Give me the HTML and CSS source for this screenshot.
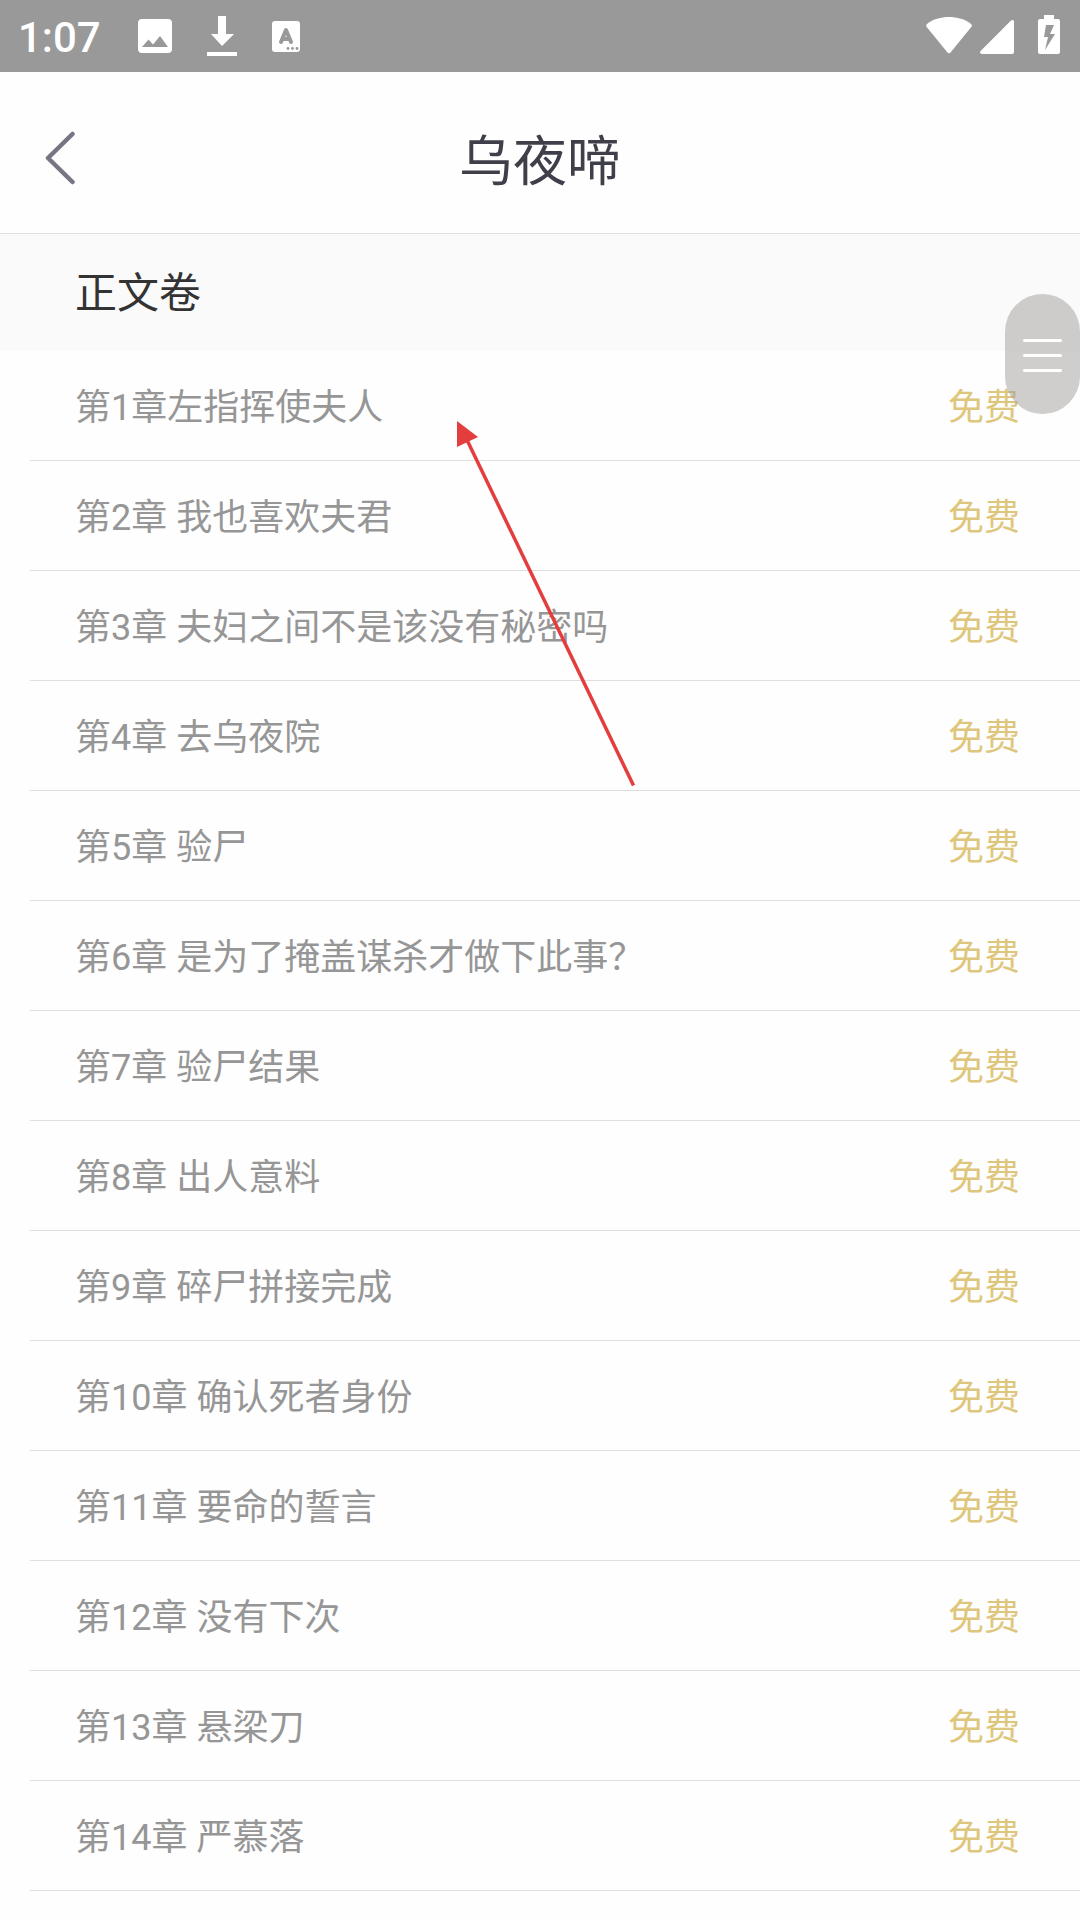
FILE: index.html
```html
<!DOCTYPE html>
<html lang="zh-CN">
<head>
<meta charset="UTF-8">
<meta name="viewport" content="width=device-width,initial-scale=1">
<title>乌夜啼</title>
<link rel="stylesheet" href="styles.css">
</head>
<body>

<div class="statusbar">
  <span class="time">1:07</span>
  <div class="icons">
    <svg width="34" height="34" viewBox="0 0 34 34"><path fill="#fff" fill-rule="evenodd" d="M4 0h26a4 4 0 0 1 4 4v26a4 4 0 0 1-4 4H4a4 4 0 0 1-4-4V4a4 4 0 0 1 4-4zM4 28h26l-8-11-7 8.500-4.500-5z"/></svg>
    <svg width="30" height="40" viewBox="0 0 30 40"><path fill="#fff" d="M11 0h8v18h8L15 30 4 18h7zM0 36h30v4H0z"/></svg>
    <svg width="28" height="31" viewBox="0 0 28 31"><rect width="28" height="31" rx="3" fill="#fff"/><path d="M9 21l5-12 5 12M10.500 18h7" fill="none" stroke="#999" stroke-width="4" stroke-linecap="round" stroke-linejoin="round"/><g fill="#999"><circle cx="16" cy="27.500" r="1.400"/><circle cx="20.500" cy="27.500" r="1.400"/><circle cx="25" cy="27.500" r="1.400"/></g></svg>
  </div>
  <div class="signal">
    <svg width="46" height="37" viewBox="0 0 46 37"><path fill="#fff" d="M1 7C7 2 15 0 23 0s16 2 22 7q1.500 1.500.300 3L24.500 35.500q-1.500 1.500-3 0L.7 10Q-.5 8.500 1 7z"/></svg>
    <svg width="34" height="34" viewBox="0 0 34 34"><path fill="#fff" d="M.6 31L31 .6q3-1.500 3 1.400v30q0 2-2 2H2q-3-.5-1.400-3z"/></svg>
    <svg width="22" height="39" viewBox="0 0 22 39"><path fill="#fff" fill-rule="evenodd" d="M6 0h10v4h4q2 0 2 2v31q0 2-2 2H2q-2 0-2-2V6q0-2 2-2h4zM8 10L6 22h4L7 35l10-16h-5l4-9z"/></svg>
  </div>
</div>

<header class="header">
  <button class="back" aria-label="返回">
    <svg width="30" height="54" viewBox="0 0 30 54"><path d="M27.500 3L3 27l24.500 24" fill="none" stroke="#767683" stroke-width="4.500" stroke-linecap="round" stroke-linejoin="round"/></svg>
  </button>
  <h1>乌夜啼</h1>
</header>

<main>
  <h2 class="volume">正文卷</h2>
  <ul class="chapters">
    <li><a href="#1"><span>第1章左指挥使夫人</span><span class="free">免费</span></a></li>
    <li><a href="#2"><span>第2章 我也喜欢夫君</span><span class="free">免费</span></a></li>
    <li><a href="#3"><span>第3章 夫妇之间不是该没有秘密吗</span><span class="free">免费</span></a></li>
    <li><a href="#4"><span>第4章 去乌夜院</span><span class="free">免费</span></a></li>
    <li><a href="#5"><span>第5章 验尸</span><span class="free">免费</span></a></li>
    <li><a href="#6"><span>第6章 是为了掩盖谋杀才做下此事？</span><span class="free">免费</span></a></li>
    <li><a href="#7"><span>第7章 验尸结果</span><span class="free">免费</span></a></li>
    <li><a href="#8"><span>第8章 出人意料</span><span class="free">免费</span></a></li>
    <li><a href="#9"><span>第9章 碎尸拼接完成</span><span class="free">免费</span></a></li>
    <li><a href="#10"><span>第10章 确认死者身份</span><span class="free">免费</span></a></li>
    <li><a href="#11"><span>第11章 要命的誓言</span><span class="free">免费</span></a></li>
    <li><a href="#12"><span>第12章 没有下次</span><span class="free">免费</span></a></li>
    <li><a href="#13"><span>第13章 悬梁刀</span><span class="free">免费</span></a></li>
    <li><a href="#14"><span>第14章 严慕落</span><span class="free">免费</span></a></li>
  </ul>
</main>

<button class="float-menu" aria-label="菜单"><i></i><i></i><i></i></button>

<!-- 指向第1章的红色箭头 -->
<svg class="arrow" width="178" height="366" viewBox="0 0 178 366"><path d="M10 19l166.500 345.500" stroke="#e43d3d" stroke-width="3.500"/><path d="M0 0v26l21-10z" fill="#e43d3d"/></svg>

</body>
</html>
```
FILE: styles.css
```css
:root{
  --bg:     #fefefe;
  --line:   #dfdfdf;
  --text:   #969696;
  --gold:   #dfc67d;
}
*{box-sizing:border-box;margin:0;padding:0}
body{
  font-family:Roboto,"Noto Sans CJK SC",sans-serif;
  background:var(--bg);
  color:var(--text);
  position:relative;
}
button{border:none;background:none;cursor:pointer}
svg{display:block}

/* ---------- Status bar ---------- */
.statusbar{
  height:72px;
  padding:0 20px 0 18px;
  background:#999;
  display:flex;
  align-items:center;
  justify-content:space-between;
}
.time{
  padding-top:2px;
  color:#fff;
  font-size:42px;
  font-weight:500;
}
.icons,.signal{display:flex}
.icons{align-items:center;gap:35px;margin-left:37px;margin-right:auto}
.signal{align-items:flex-end;gap:8px;padding-bottom:3px}
.signal svg:last-child{margin-left:16px}

/* ---------- Header ---------- */
.header{
  height:162px;
  padding:10px 45px 0;
  border-bottom:1px solid var(--line);
  display:grid;
  grid-template-columns:1fr auto 1fr;
  align-items:center;
}
h1{
  font-size:54px;
  font-weight:400;
  color:#3f3f49;
}
.back{justify-self:start}

/* ---------- Chapters ---------- */
.volume{
  height:117px;
  padding:3px 75px 0;
  background:#fafafa;
  color:#333;
  font-size:42px;
  font-weight:400;
  line-height:114px;
}
.volume,.chapters a{white-space:nowrap}
.chapters{list-style:none;padding-left:30px}
.chapters a{
  height:110px;
  padding:0 60px 3px 45px;
  border-bottom:1px solid var(--line);
  display:flex;
  align-items:center;
  justify-content:space-between;
  color:inherit;
  font-size:36px;
  text-decoration:none;
}
.chapters .free{color:var(--gold)}

/* ---------- Floating ---------- */
.float-menu{
  position:absolute;
  top:294px;
  right:0;
  width:75px;
  height:120px;
  padding-top:3px;
  border-radius:38px;
  background:rgba(160,158,156,.5);
  display:flex;
  flex-direction:column;
  align-items:center;
  justify-content:center;
  gap:12px;
}
.float-menu i{
  width:39px;
  height:3px;
  border-radius:2px;
  background:#fff;
}
.arrow{
  position:absolute;
  top:421px;
  left:457px;
  pointer-events:none;
}
```
